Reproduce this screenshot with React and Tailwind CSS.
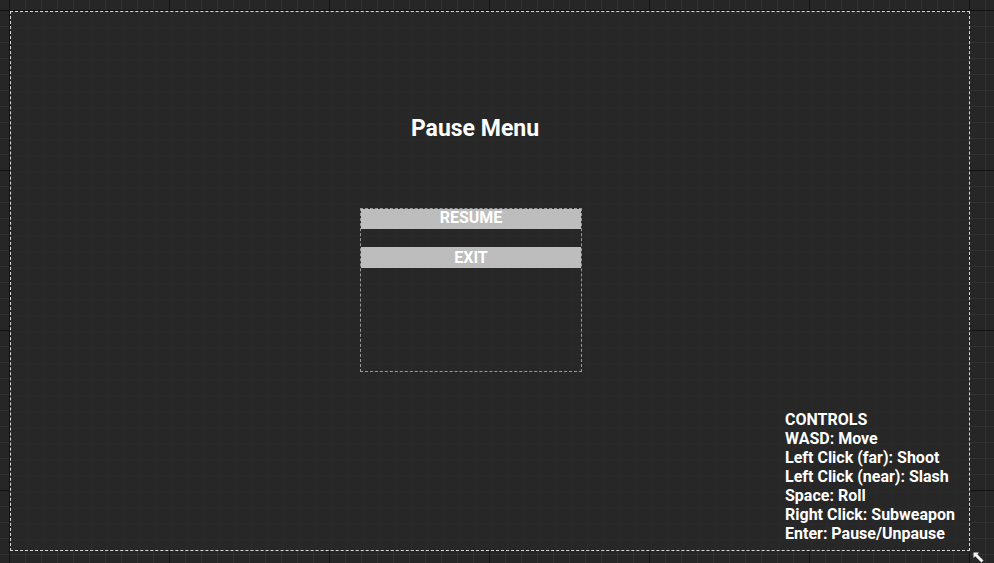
const controls = [
  'CONTROLS',
  'WASD: Move',
  'Left Click (far): Shoot',
  'Left Click (near): Slash',
  'Space: Roll',
  'Right Click: Subweapon',
  'Enter: Pause/Unpause',
]

const App = () => {
  return (
    <div
      className="relative w-[994px] h-[563px] overflow-hidden pt-[11px] pl-[10px] bg-[#262626] bg-[image:linear-gradient(to_right,#121212_1px,transparent_1px),linear-gradient(to_bottom,#121212_1px,transparent_1px),linear-gradient(to_right,#313131_1px,transparent_1px),linear-gradient(to_bottom,#313131_1px,transparent_1px)] bg-[size:160px_160px,160px_160px,16px_16px,16px_16px] bg-[position:9px_10px]"
      style={{ fontFamily: 'Roboto, "Liberation Sans", sans-serif' }}
    >
      {/* Canvas */}
      <div className="flex flex-col w-[960px] h-[540px] border border-dashed border-[#d8d8d8] bg-[#272727] bg-[image:linear-gradient(to_right,#2a2a2a_1px,transparent_1px),linear-gradient(to_bottom,#2a2a2a_1px,transparent_1px)] bg-[size:16px_16px] text-white font-bold">
        {/* Title */}
        <div className="ml-[339px] mt-[103px] w-[250px] h-[28px] leading-[28px] text-center text-[23px]">
          Pause Menu
        </div>

        {/* Button box */}
        <div className="ml-[349px] mt-[65px] w-[222px] h-[164px] border border-dashed border-[#9a9a9a] flex flex-col">
          <div className="h-[20px] pb-[2px] bg-[#bdbdbd] flex items-center justify-center text-[16px] leading-none">
            RESUME
          </div>
          <div className="mt-[18px] h-[21px] bg-[#bdbdbd] flex items-center justify-center text-[16px] leading-none">
            EXIT
          </div>
        </div>

        {/* Controls */}
        <div className="mt-auto mb-[7px] ml-[774px] flex flex-col text-[16px] leading-[19px] whitespace-nowrap">
          {controls.map((line) => (
            <div key={line}>{line}</div>
          ))}
        </div>
      </div>

      {/* Resize handle */}
      <svg
        className="absolute left-[973px] top-[552px]"
        width="11"
        height="11"
        viewBox="0 0 11 11"
      >
        <path d="M0.5 0.5 L6 0.5 L4.3 2.2 L10.5 8.4 L8.4 10.5 L2.2 4.3 L0.5 6 Z" fill="#f2f2f2" />
      </svg>
    </div>
  )
}

export default App
